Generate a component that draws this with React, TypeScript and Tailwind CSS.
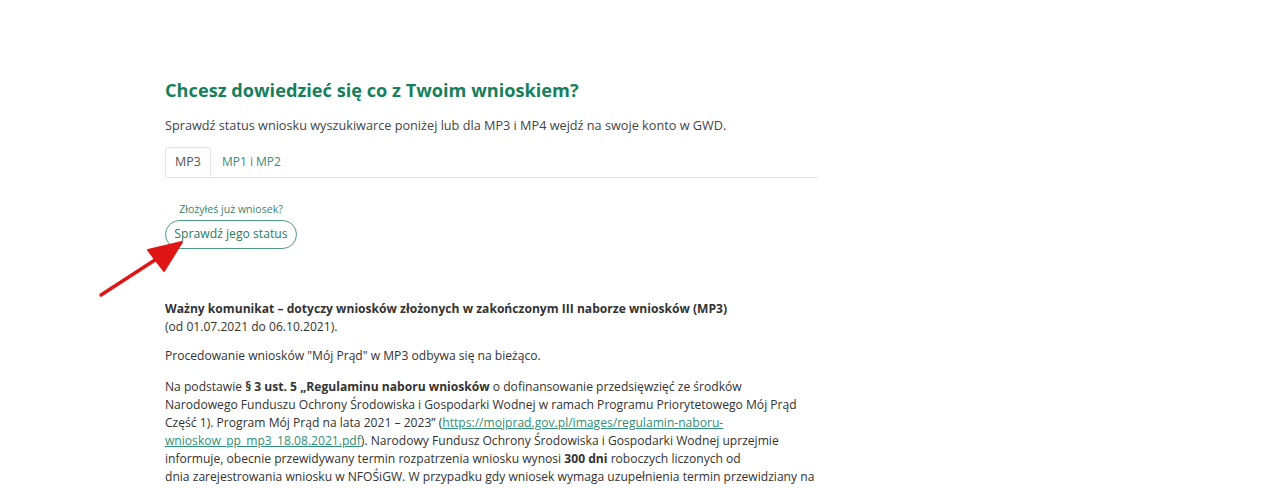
const font = { fontFamily: '"Open Sans", "Noto Sans", sans-serif' };

function RedArrow() {
  return (
    <svg
      className="absolute left-[98px] top-[236px]"
      width="92"
      height="64"
      viewBox="0 0 92 64"
    >
      <path d="M3 59 L60 22" stroke="#e01515" strokeWidth="3.5" strokeLinecap="round" />
      <path d="M84 6 L50 14 L66 35 Z" fill="#e01515" stroke="#e01515" strokeWidth="2" strokeLinejoin="round" />
    </svg>
  );
}

export default function App() {
  return (
    <div className="relative w-[1280px] h-[488px] overflow-hidden bg-white text-[#333]" style={font}>
      <RedArrow />
      <div className="ml-[165px] w-[656px] pt-[78px]">
        <h2 className="text-[18.2px] font-bold leading-[24px] text-[#177f5c]">
          Chcesz dowiedzieć się co z Twoim wnioskiem?
        </h2>
        <p className="mt-[14px] text-[12.7px] leading-[18px] text-[#444]">
          Sprawdź status wniosku wyszukiwarce poniżej lub dla MP3 i MP4 wejdź na swoje konto w GWD.
        </p>

        <div className="mt-[13px] flex border-b border-[#e3e3e3] w-[653px]">
          <div className="-mb-px h-[30px] px-[9px] flex items-center border border-b-white border-[#e3e3e3] rounded-t-[3px] bg-white text-[12.5px] text-[#555]">
            MP3
          </div>
          <div className="h-[30px] px-[11px] flex items-center text-[12px] text-[#3f8a78]">
            MP1 i MP2
          </div>
        </div>

        <div className="mt-[24px] w-[132px] flex flex-col items-center">
          <span className="text-[10.6px] leading-[14px] text-[#3f7f6f]">Złożyłeś już wniosek?</span>
          <button className="mt-[4px] h-[29px] w-[132px] rounded-full border border-[#4d9a84] text-[12.2px] text-[#2b7a64] bg-white">
            Sprawdź jego status
          </button>
        </div>

        <div className="mt-[51px] text-[12.1px] leading-[18px] text-[#333]">
          <p>
            <b>Ważny komunikat – dotyczy wniosków złożonych w zakończonym III naborze wniosków (MP3)</b>
            <br />
            (od 01.07.2021 do 06.10.2021).
          </p>
          <p className="mt-[11px]">Procedowanie wniosków "Mój Prąd" w MP3 odbywa się na bieżąco.</p>
          <p className="mt-[13px]">
            Na podstawie <b>§ 3 ust. 5 „Regulaminu naboru wniosków</b> o dofinansowanie przedsięwzięć ze środków
            <br />
            Narodowego Funduszu Ochrony Środowiska i Gospodarki Wodnej w ramach Programu Priorytetowego Mój Prąd
            <br />
            Część 1). Program Mój Prąd na lata 2021 – 2023” (
            <a className="text-[#2f8f78] underline" href="#">
              https://mojprad.gov.pl/images/regulamin-naboru-
              <br />
              wnioskow_pp_mp3_18.08.2021.pdf
            </a>
            ). Narodowy Fundusz Ochrony Środowiska i Gospodarki Wodnej uprzejmie
            <br />
            informuje, obecnie przewidywany termin rozpatrzenia wniosku wynosi <b>300 dni</b> roboczych liczonych od
            <br />
            dnia zarejestrowania wniosku w NFOŚiGW. W przypadku gdy wniosek wymaga uzupełnienia termin przewidziany na
          </p>
        </div>
      </div>
    </div>
  );
}
